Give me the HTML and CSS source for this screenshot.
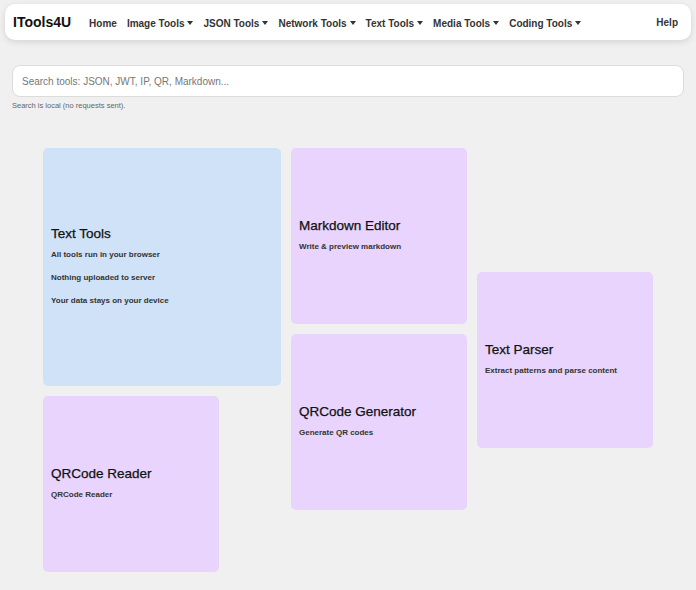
FILE: index.html
```html
<!DOCTYPE html>
<html lang="en">
<head>
<meta charset="utf-8">
<title>ITools4U</title>
<link rel="stylesheet" href="styles.css">
</head>
<body>
<nav class="navbar">
  <a class="brand" href="#">ITools4U</a>
  <ul class="nav-links">
    <li><a href="#">Home</a></li>
    <li><a class="dropdown" href="#">Image Tools</a></li>
    <li><a class="dropdown" href="#">JSON Tools</a></li>
    <li><a class="dropdown" href="#">Network Tools</a></li>
    <li><a class="dropdown" href="#">Text Tools</a></li>
    <li><a class="dropdown" href="#">Media Tools</a></li>
    <li><a class="dropdown" href="#">Coding Tools</a></li>
  </ul>
  <a class="help" href="#">Help</a>
</nav>

<div class="search">
  <input class="search-input" type="text" placeholder="Search tools: JSON, JWT, IP, QR, Markdown...">
  <div class="search-hint">Search is local (no requests sent).</div>
</div>

<main class="bento">
  <div class="card card-blue c-text-tools">
    <h2 class="card-title">Text Tools</h2>
    <p class="card-desc">All tools run in your browser</p>
    <p class="card-desc">Nothing uploaded to server</p>
    <p class="card-desc">Your data stays on your device</p>
  </div>
  <div class="card card-purple c-markdown">
    <h2 class="card-title">Markdown Editor</h2>
    <p class="card-desc">Write &amp; preview markdown</p>
  </div>
  <div class="card card-purple c-parser">
    <h2 class="card-title">Text Parser</h2>
    <p class="card-desc">Extract patterns and parse content</p>
  </div>
  <div class="card card-purple c-qrgen">
    <h2 class="card-title">QRCode Generator</h2>
    <p class="card-desc">Generate QR codes</p>
  </div>
  <div class="card card-purple c-qrread">
    <h2 class="card-title">QRCode Reader</h2>
    <p class="card-desc">QRCode Reader</p>
  </div>
</main>
</body>
</html>
```

FILE: styles.css
```css
* { box-sizing: border-box; }

body {
  margin: 0;
  padding: 4px 5px 0;
  background: #f0f0f0;
  font-family: "Liberation Sans", Arial, sans-serif;
  color: #222;
}

a { text-decoration: none; color: inherit; }

.navbar {
  display: flex;
  align-items: center;
  height: 36px;
  padding: 0 8px;
  background: #fff;
  border-radius: 10px;
  box-shadow: 0 2px 6px rgba(0,0,0,0.12);
}

.brand {
  font-size: 14px;
  font-weight: 700;
  color: #111;
  margin-right: 18px;
}

.nav-links {
  display: flex;
  gap: 10px;
  list-style: none;
  margin: 0;
  padding: 0;
  flex: 1;
}

.nav-links a, .help {
  font-size: 10px;
  font-weight: 700;
  color: #333;
}

.dropdown::after {
  content: "";
  display: inline-block;
  margin-left: 3px;
  vertical-align: 2px;
  border-top: 4px solid #333;
  border-left: 3px solid transparent;
  border-right: 3px solid transparent;
}

.help { margin-right: 5px; }

.search {
  padding: 25px 7px 0;
}

.search-input {
  display: block;
  width: 100%;
  height: 32px;
  padding: 0 9px;
  border: 1px solid #dcdcdc;
  border-radius: 8px;
  background: #fff;
  font-family: inherit;
  font-size: 10px;
  color: #333;
  outline: none;
}

.search-input::placeholder { color: #777; }

.search-hint {
  margin-top: 4px;
  font-size: 7.5px;
  color: #666;
}

.bento {
  display: grid;
  grid-template-columns: repeat(10, 52px);
  grid-auto-rows: 52px;
  gap: 10px;
  padding: 38px 0 0 38px;
}

.card {
  display: flex;
  flex-direction: column;
  justify-content: center;
  padding: 0 8px 2px;
  border-radius: 5px;
}

.card-blue { background: #cfe2f8; }
.card-purple { background: #e8d4fc; }

.card-title {
  margin: 0 0 9px;
  font-size: 13.5px;
  line-height: 1.1;
  font-weight: 400;
  -webkit-text-stroke: 0.25px #111;
  color: #111;
}

.card-desc {
  margin: 0 0 14px;
  font-size: 8px;
  font-weight: 700;
  color: #333;
}
.card-desc:last-child { margin-bottom: 0; }

.c-text-tools { grid-column: 1 / span 4; grid-row: 1 / span 4; }
.c-markdown   { grid-column: 5 / span 3; grid-row: 1 / span 3; }
.c-parser     { grid-column: 8 / span 3; grid-row: 3 / span 3; }
.c-qrgen      { grid-column: 5 / span 3; grid-row: 4 / span 3; }
.c-qrread     { grid-column: 1 / span 3; grid-row: 5 / span 3; }
```
